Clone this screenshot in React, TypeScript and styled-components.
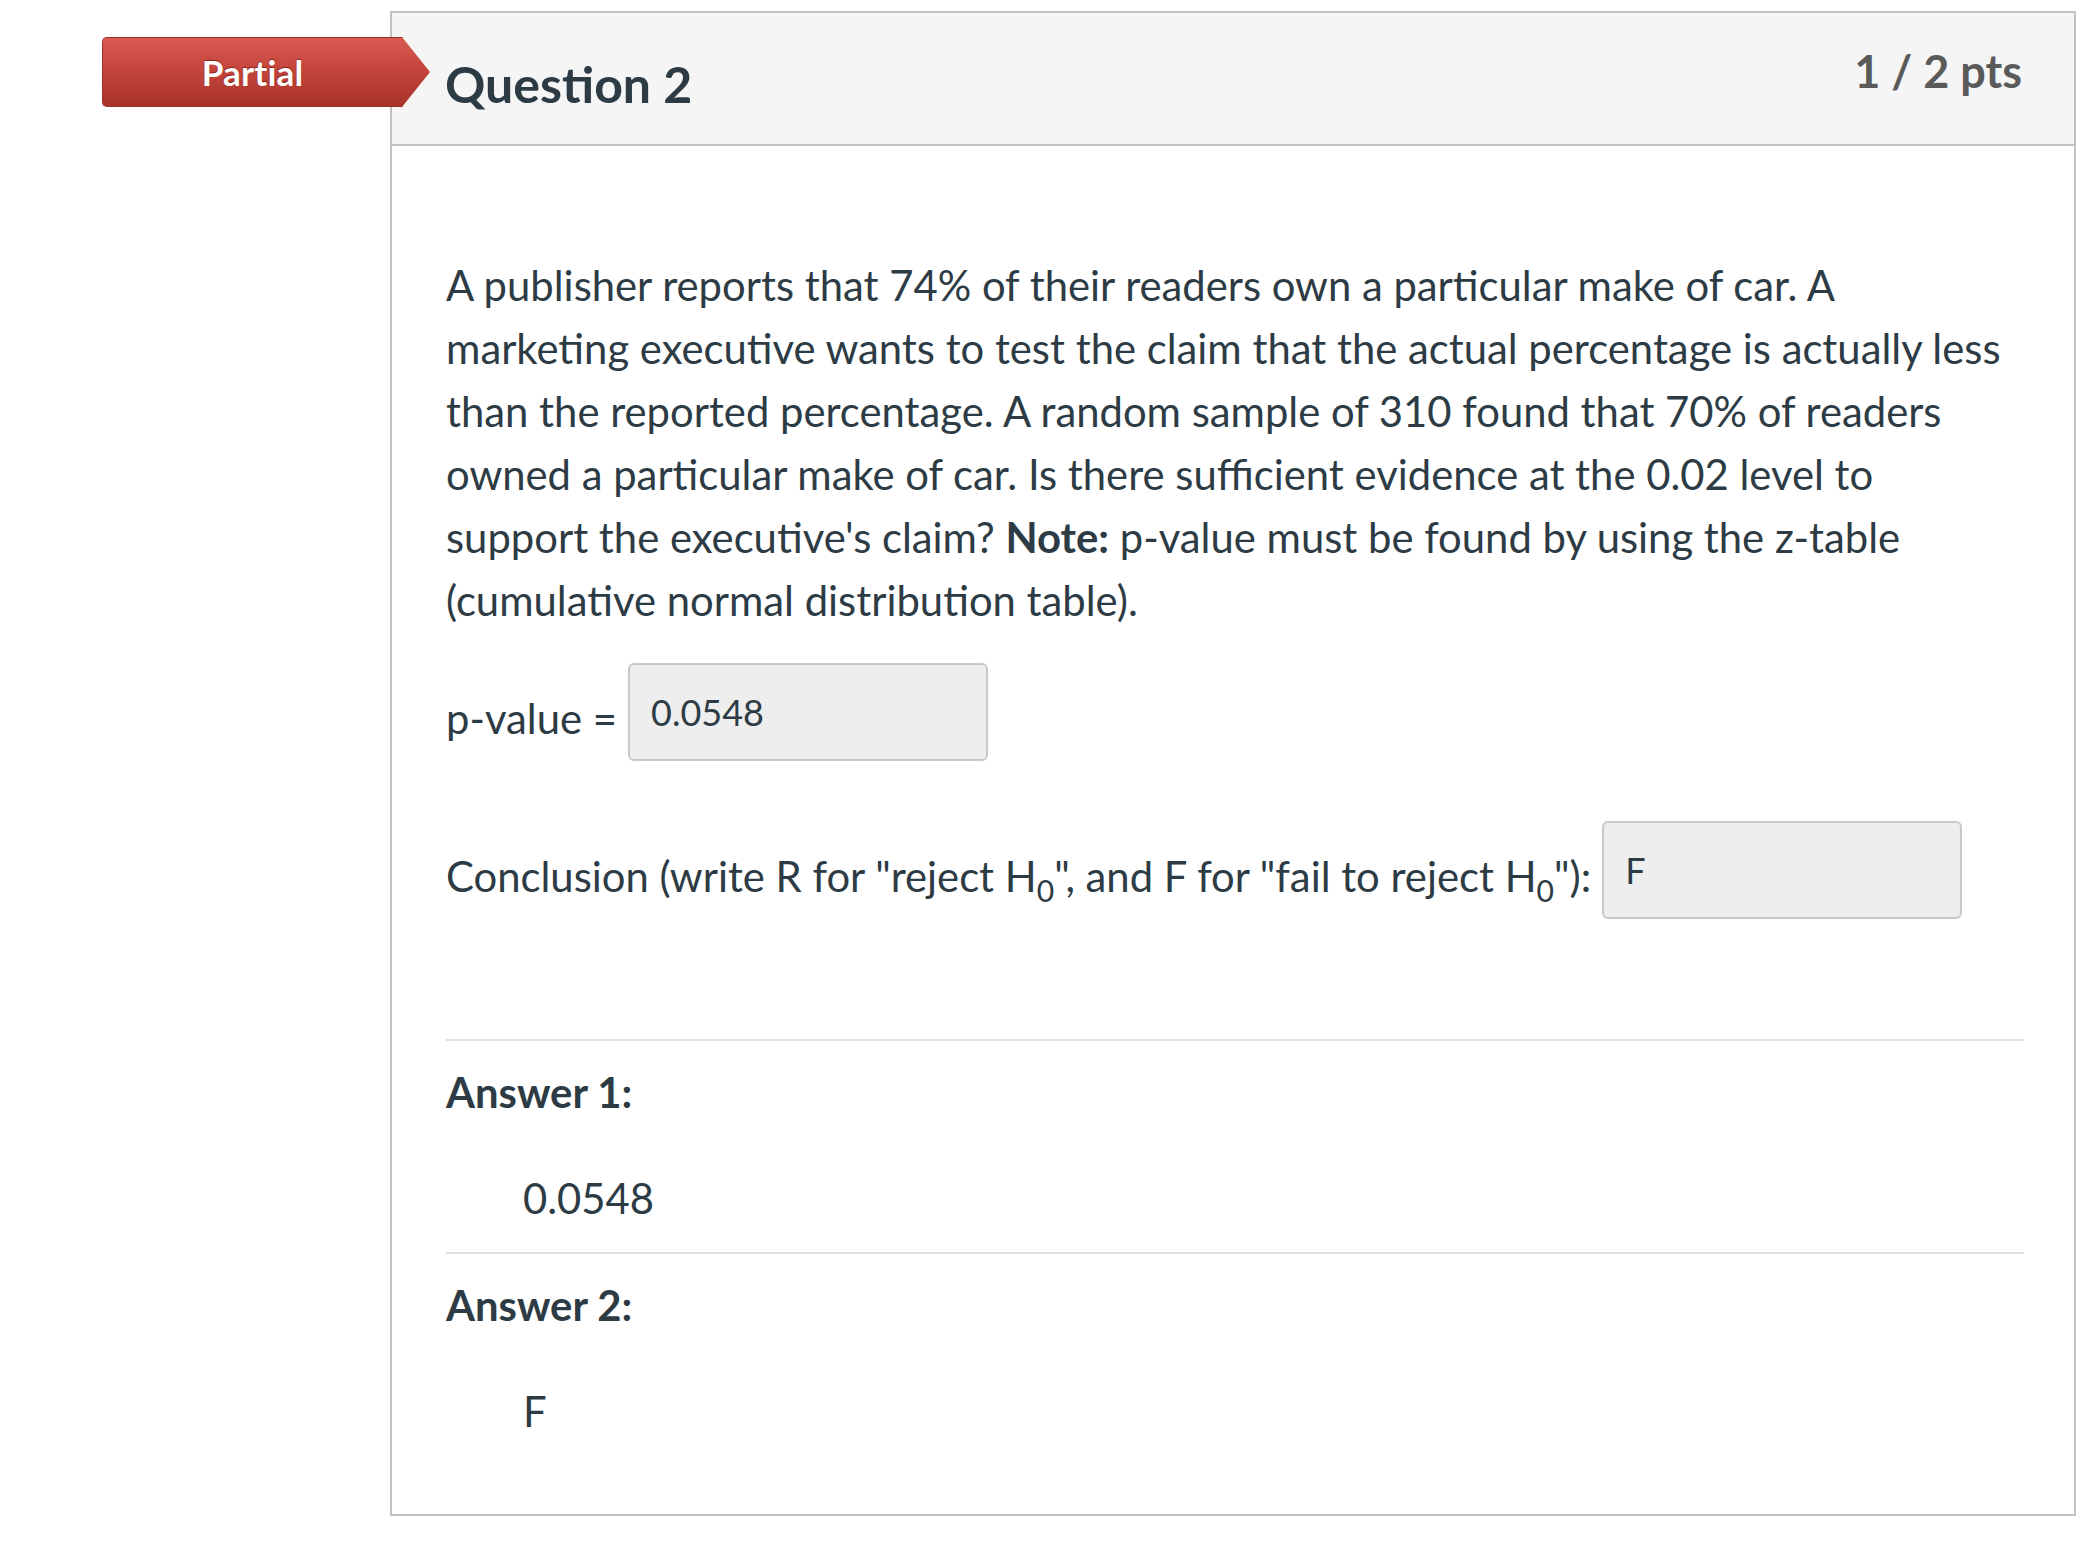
import React from 'react'
import styled, { createGlobalStyle } from 'styled-components'

const GlobalStyle = createGlobalStyle`
  html, body {
    margin: 0;
    padding: 0;
    background: #ffffff;
  }
  body {
    font-family: Lato, "Noto Sans", "Liberation Sans", sans-serif;
    color: #2d3b45;
  }
`

const Page = styled.div`
  display: flex;
  align-items: flex-start;
  padding-top: 11px;
`

const BadgeSlot = styled.div`
  position: relative;
  z-index: 2;
  width: 390px;
  flex-shrink: 0;
  padding-top: 26px;
`

const Badge = styled.div`
  position: relative;
  box-sizing: border-box;
  width: 301px;
  height: 70px;
  margin-left: 102px;
  display: flex;
  align-items: center;
  justify-content: center;
  border: 1px solid #9e2f27;
  border-right: 1px solid #d86a60;
  border-radius: 5px 0 0 5px;
  background: linear-gradient(to bottom, #d85a50 0%, #c2443a 50%, #a8332a 100%);
  color: #ffffff;
  font-size: 35px;
  font-weight: 700;
  text-shadow: 0 -1px 1px rgba(80, 0, 0, 0.55);
  letter-spacing: 0.2px;

  &::after {
    content: '';
    position: absolute;
    left: 100%;
    top: -1px;
    width: 28px;
    height: 70px;
    background: linear-gradient(to bottom, #d85a50 0%, #c2443a 50%, #a8332a 100%);
    clip-path: polygon(0 0, 100% 50%, 0 100%);
  }
`

const Card = styled.div`
  box-sizing: border-box;
  width: 1686px;
  border: 2px solid #c2c2c2;
  background: #ffffff;
`

const Header = styled.div`
  box-sizing: border-box;
  height: 133px;
  display: flex;
  justify-content: space-between;
  align-items: flex-start;
  padding: 0 52px 0 53px;
  background: #f5f5f5;
  border-bottom: 2px solid #c2c2c2;
`

const Title = styled.h2`
  margin: 41px 0 0;
  font-size: 50px;
  font-weight: 700;
  line-height: 1.2;
  color: #2d3b45;
`

const Points = styled.div`
  margin-top: 31px;
  font-size: 45px;
  font-weight: 700;
  line-height: 1.2;
  color: #5a5a5a;
`

const Body = styled.div`
  padding: 108px 50px 72px 54px;
`

const QuestionText = styled.p`
  margin: 0;
  font-size: 41.8px;
  line-height: 63px;
`

const BlankRow = styled.div<{ $top: number }>`
  display: flex;
  align-items: flex-start;
  gap: 11px;
  margin-top: ${p => p.$top}px;
`

const BlankLabel = styled.span`
  margin-top: 25px;
  font-size: 41.8px;
  line-height: 61.5px;
  white-space: nowrap;

  sub {
    font-size: 0.72em;
    line-height: 0;
    vertical-align: -0.32em;
  }
`

const Blank = styled.div`
  box-sizing: border-box;
  width: 360px;
  height: 98px;
  display: flex;
  align-items: center;
  padding: 0 21px;
  background: #eeeeee;
  border: 2px solid #c9c9c9;
  border-radius: 6px;
  font-size: 36px;
  color: #2d3b45;
`

const Answers = styled.div`
  margin-top: 120px;
`

const AnswerItem = styled.div<{ $last?: boolean }>`
  border-top: 2px solid #e0e0e0;
  padding: 21px 0 ${p => (p.$last ? 0 : 23)}px;
`

const AnswerLabel = styled.div`
  font-size: 41.8px;
  font-weight: 700;
  line-height: 61.5px;
`

const AnswerValue = styled.div`
  margin-top: 44px;
  padding-left: 77px;
  font-size: 41.8px;
  line-height: 61.5px;
`

const answers = ['0.0548', 'F']

export default function App() {
  return (
    <>
      <GlobalStyle />
      <Page>
        <BadgeSlot>
          <Badge>Partial</Badge>
        </BadgeSlot>
        <Card>
          <Header>
            <Title>Question 2</Title>
            <Points>1 / 2 pts</Points>
          </Header>
          <Body>
            <QuestionText>
              A publisher reports that 74% of their readers own a particular make of car. A
              marketing executive wants to test the claim that the actual percentage is actually
              less than the reported percentage. A random sample of 310 found that 70% of readers
              owned a particular make of car. Is there sufficient evidence at the 0.02 level to
              support the executive's claim? <strong>Note:</strong> p-value must be found by using
              the z-table (cumulative normal distribution table).
            </QuestionText>
            <BlankRow $top={31}>
              <BlankLabel>p-value =</BlankLabel>
              <Blank>0.0548</Blank>
            </BlankRow>
            <BlankRow $top={60}>
              <BlankLabel>
                Conclusion (write R for "reject H<sub>0</sub>", and F for "fail to reject H
                <sub>0</sub>"):
              </BlankLabel>
              <Blank>F</Blank>
            </BlankRow>
            <Answers>
              {answers.map((a, i) => (
                <AnswerItem key={i} $last={i === answers.length - 1}>
                  <AnswerLabel>Answer {i + 1}:</AnswerLabel>
                  <AnswerValue>{a}</AnswerValue>
                </AnswerItem>
              ))}
            </Answers>
          </Body>
        </Card>
      </Page>
    </>
  )
}
